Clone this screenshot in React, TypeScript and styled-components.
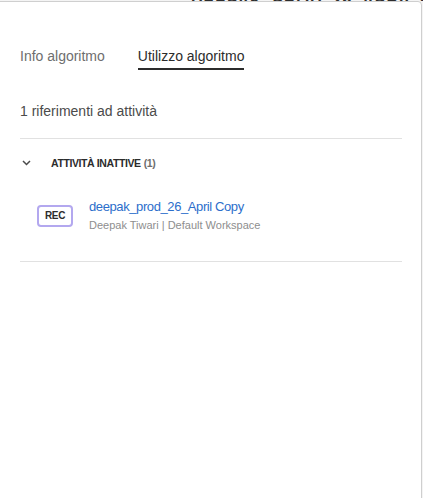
import React, { useState } from "react";
import styled, { createGlobalStyle } from "styled-components";

const GlobalStyle = createGlobalStyle`
  html, body {
    margin: 0;
    padding: 0;
    background: #ffffff;
    overflow: hidden;
  }
  body {
    font-family: "Liberation Sans", Arial, sans-serif;
  }
`;

const Page = styled.div`
  width: 423px;
  height: 498px;
  overflow: hidden;
  background: #f4f4f4;
`;

const BehindTitle = styled.div`
  height: 1px;
  overflow: hidden;
  padding-left: 191px;
  font-size: 16px;
  font-weight: 700;
  line-height: 1px;
  color: #2c2c2c;
  letter-spacing: 1px;
  white-space: nowrap;
`;

const Panel = styled.section`
  margin-left: -6px;
  width: 428px;
  height: 520px;
  box-sizing: border-box;
  background: #ffffff;
  border: 1px solid #cfcfcf;
  border-radius: 4px;
  padding: 41px 20px 0 25px;
`;

const Tabs = styled.nav`
  display: flex;
  gap: 33px;
  height: 28px;
`;

const Tab = styled.button<{ $active?: boolean }>`
  all: unset;
  cursor: pointer;
  font-size: 14px;
  line-height: 20px;
  height: 27px;
  box-sizing: border-box;
  color: ${(p) => (p.$active ? "#2c2c2c" : "#6e6e6e")};
  border-bottom: 2px solid ${(p) => (p.$active ? "#2c2c2c" : "transparent")};
`;

const Count = styled.p`
  margin: 30px 0 17px;
  font-size: 14px;
  line-height: 20px;
  color: #4b4b4b;
`;

const Divider = styled.hr`
  margin: 0;
  border: none;
  border-top: 1px solid #e1e1e1;
  width: 382px;
`;

const GroupHeader = styled.div`
  display: flex;
  align-items: center;
  height: 48px;
  padding-left: 2px;
`;

const Chevron = styled.svg`
  width: 9px;
  height: 6px;
  margin-right: 20px;
  color: #4b4b4b;
`;

const GroupTitle = styled.span`
  font-size: 10.5px;
  font-weight: 700;
  letter-spacing: -0.4px;
  color: #2c2c2c;
  text-transform: uppercase;
`;

const GroupCount = styled.span`
  font-weight: 700;
  color: #6e6e6e;
  margin-left: 3px;
`;

const Row = styled.div`
  display: flex;
  align-items: center;
  gap: 16px;
  padding: 11px 0 28px 17px;
`;

const Badge = styled.span`
  display: inline-flex;
  align-items: center;
  justify-content: center;
  width: 36px;
  height: 22px;
  box-sizing: border-box;
  border: 2px solid #b3a8ef;
  border-radius: 4px;
  font-size: 10px;
  font-weight: 700;
  color: #2c2c2c;
  letter-spacing: -0.3px;
`;

const Info = styled.div`
  display: flex;
  flex-direction: column;
  gap: 3px;
`;

const Title = styled.a`
  font-size: 13px;
  line-height: 17px;
  letter-spacing: -0.4px;
  color: #2c6ecb;
  text-decoration: none;
  cursor: pointer;
`;

const Meta = styled.span`
  font-size: 11px;
  line-height: 15px;
  color: #8e8e8e;
`;

export default function App() {
  const [tab, setTab] = useState(1);
  const tabs = ["Info algoritmo", "Utilizzo algoritmo"];

  return (
    <>
      <GlobalStyle />
      <Page>
        <BehindTitle>DEEPAK_PROD_26_APRIL COPY</BehindTitle>
        <Panel>
          <Tabs>
            {tabs.map((t, i) => (
              <Tab key={t} $active={tab === i} onClick={() => setTab(i)}>
                {t}
              </Tab>
            ))}
          </Tabs>
          <Count>1 riferimenti ad attività</Count>
          <Divider />
          <GroupHeader>
            <Chevron viewBox="0 0 9 6" fill="none">
              <path d="M1 1l3.5 3.5L8 1" stroke="currentColor" strokeWidth="1.5" />
            </Chevron>
            <GroupTitle>
              Attività inattive
              <GroupCount>(1)</GroupCount>
            </GroupTitle>
          </GroupHeader>
          <Row>
            <Badge>REC</Badge>
            <Info>
              <Title>deepak_prod_26_April Copy</Title>
              <Meta>Deepak Tiwari | Default Workspace</Meta>
            </Info>
          </Row>
          <Divider />
        </Panel>
      </Page>
    </>
  );
}
